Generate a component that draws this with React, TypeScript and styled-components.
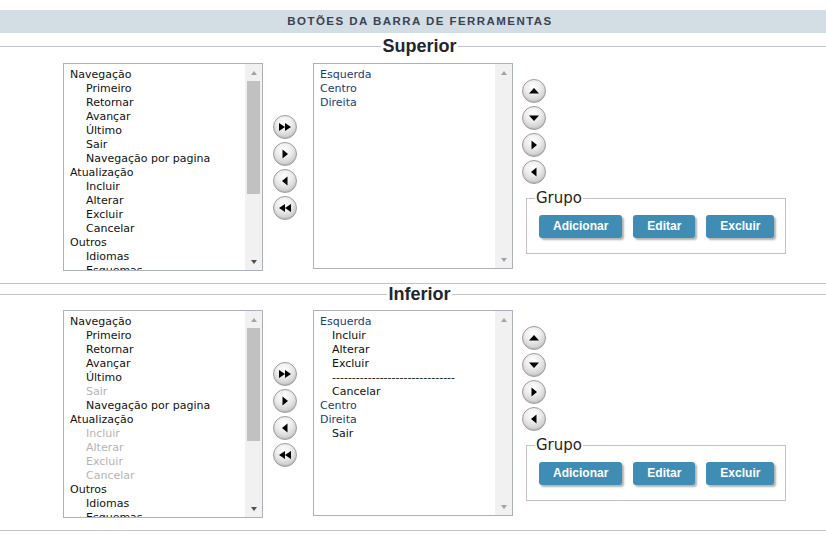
import React from "react";
import styled, { createGlobalStyle } from "styled-components";

const Global = createGlobalStyle`
  html, body { margin: 0; padding: 0; background: #fff; }
  body { font-family: "DejaVu Sans", Verdana, sans-serif; }
`;

const Page = styled.div`
  width: 826px;
  padding-top: 10px;
`;

const HeaderBar = styled.div`
  height: 23px;
  box-sizing: border-box;
  padding-left: 14px;
  background: #d3dde4;
  color: #3b4252;
  font: bold 11.5px/23px "Liberation Sans", Arial, sans-serif;
  letter-spacing: 1.45px;
  text-align: center;
  text-transform: uppercase;
`;

const Section = styled.fieldset<{ $mt: number; $pt: number }>`
  margin: ${(p) => p.$mt}px 0 0 0;
  padding: ${(p) => p.$pt}px 50px 12px 63px;
  border: none;
  border-top: 1px solid #c3c3c3;
  border-bottom: 1px solid #c3c3c3;
  min-width: 0;
`;

const SectionLegend = styled.legend`
  margin: 0 auto;
  padding: 0 1px;
  font: bold 18px/20px "Liberation Sans", Arial, sans-serif;
  color: #1f2531;
`;

const Row = styled.div`
  display: flex;
  align-items: flex-start;
`;

const ListBox = styled.div<{ $h: number }>`
  display: flex;
  width: 200px;
  height: ${(p) => p.$h}px;
  box-sizing: border-box;
  border: 1px solid #abb0b9;
  background: #fff;
  flex: none;
`;

const Items = styled.div`
  flex: 1;
  overflow: hidden;
  padding: 4px 0 0 6px;
`;

const Item = styled.div<{ $indent: number; $tone: "normal" | "group" | "disabled" }>`
  font: 11px/14px "DejaVu Sans", Verdana, sans-serif;
  white-space: nowrap;
  padding-left: ${(p) => p.$indent}px;
  color: ${(p) =>
    p.$tone === "group" ? "#203d78" : p.$tone === "disabled" ? "#b4b4b4" : "#111"};
`;

const Scrollbar = styled.div`
  width: 17px;
  background: #f1f1f1;
  display: flex;
  flex-direction: column;
  flex: none;
`;

const ScrollArrow = styled.div<{ $up: boolean; $active: boolean }>`
  height: 17px;
  display: flex;
  align-items: center;
  justify-content: center;
  flex: none;
  &::after {
    content: "";
    width: 0;
    height: 0;
    border-left: 3.5px solid transparent;
    border-right: 3.5px solid transparent;
    ${(p) =>
      p.$up
        ? `border-bottom: 4px solid ${p.$active ? "#505050" : "#a3a3a3"};`
        : `border-top: 4px solid ${p.$active ? "#505050" : "#a3a3a3"};`}
  }
`;

const Track = styled.div`
  flex: 1;
  padding: 0 2px;
`;

const Thumb = styled.div<{ $h: number }>`
  height: ${(p) => p.$h}px;
  background: #c1c1c1;
`;

const MoveColumn = styled.div`
  align-self: stretch;
  display: flex;
  flex-direction: column;
  justify-content: center;
  gap: 3px;
  margin: 0 16px 0 10px;
  padding-top: 1px;
`;

const SideColumn = styled.div`
  display: flex;
  flex-direction: column;
  align-items: flex-start;
  gap: 3px;
  padding-top: 16px;
  margin-left: 9px;
`;

const RoundButton = styled.button`
  width: 24px;
  height: 24px;
  border-radius: 50%;
  border: 1px solid #9c9c9c;
  padding: 0;
  display: flex;
  align-items: center;
  justify-content: center;
  background: radial-gradient(circle at 45% 30%, #ffffff 0%, #ececec 40%, #c4c4c4 85%, #b0b0b0 100%);
  box-shadow: inset 0 -1px 1px rgba(0, 0, 0, 0.1);
  cursor: pointer;
`;

const GroupBox = styled.fieldset`
  margin: 2px 0 0 4px;
  width: 260px;
  box-sizing: border-box;
  padding: 8px 10px 15px 8px;
  border: 1px solid #c2c2c2;
`;

const GroupLegend = styled.legend`
  padding: 0 1px;
  font: 15px/18px "DejaVu Sans", Verdana, sans-serif;
  color: #2a2016;
`;

const GroupButtons = styled.div`
  display: flex;
  gap: 11px;
  margin-left: 4px;
`;

const ActionButton = styled.button`
  height: 23px;
  padding: 0 14px;
  border: none;
  border-radius: 3px;
  background: #3f8db5;
  color: #fff;
  font: bold 12px/23px "Liberation Sans", Arial, sans-serif;
  box-shadow: 2px 2px 2px rgba(0, 0, 0, 0.3);
  cursor: pointer;
`;

type Icon = "rr" | "r" | "l" | "ll" | "up" | "down";

const Glyph = ({ kind }: { kind: Icon }) => {
  const paths: Record<Icon, string> = {
    rr: "M5 7 L11 11 L5 15 Z M11 7 L17 11 L11 15 Z",
    r: "M8.5 6.5 L14 11 L8.5 15.5 Z",
    l: "M13.5 6.5 L8 11 L13.5 15.5 Z",
    ll: "M11 7 L5 11 L11 15 Z M17 7 L11 11 L17 15 Z",
    up: "M6 13.5 L11 8 L16 13.5 Z",
    down: "M6 8.5 L11 14 L16 8.5 Z",
  };
  return (
    <svg width="22" height="22" viewBox="0 0 22 22">
      <path d={paths[kind]} fill="#000" />
    </svg>
  );
};

type Entry = { t: string; i: number; tone: "normal" | "group" | "disabled" };

const sourceEntries = (disabled: string[]): Entry[] => {
  const raw: [string, number][] = [
    ["Navegação", 0],
    ["Primeiro", 1],
    ["Retornar", 1],
    ["Avançar", 1],
    ["Último", 1],
    ["Sair", 1],
    ["Navegação por pagina", 1],
    ["Atualização", 0],
    ["Incluir", 1],
    ["Alterar", 1],
    ["Excluir", 1],
    ["Cancelar", 1],
    ["Outros", 0],
    ["Idiomas", 1],
    ["Esquemas", 1],
    ["Ajuda", 1],
    ["Exportar", 1],
    ["Imprimir", 1],
  ];
  return raw.map(([t, i]) => ({
    t,
    i: i * 16,
    tone: disabled.includes(t) ? "disabled" : "normal",
  }));
};

const dashes = "-".repeat(31);

const SourceList = ({ entries }: { entries: Entry[] }) => (
  <ListBox $h={208}>
    <Items>
      {entries.map((e, k) => (
        <Item key={k} $indent={e.i} $tone={e.tone}>
          {e.t}
        </Item>
      ))}
    </Items>
    <Scrollbar>
      <ScrollArrow $up $active={false} />
      <Track>
        <Thumb $h={113} />
      </Track>
      <ScrollArrow $up={false} $active />
    </Scrollbar>
  </ListBox>
);

const TargetList = ({ entries }: { entries: Entry[] }) => (
  <ListBox $h={206}>
    <Items>
      {entries.map((e, k) => (
        <Item key={k} $indent={e.i} $tone={e.tone}>
          {e.t}
        </Item>
      ))}
    </Items>
    <Scrollbar>
      <ScrollArrow $up $active={false} />
      <Track />
      <ScrollArrow $up={false} $active={false} />
    </Scrollbar>
  </ListBox>
);

const ToolbarSection = ({
  title,
  source,
  target,
  mt,
  pt,
}: {
  title: string;
  source: Entry[];
  target: Entry[];
  mt: number;
  pt: number;
}) => (
  <Section $mt={mt} $pt={pt}>
    <SectionLegend>{title}</SectionLegend>
    <Row>
      <SourceList entries={source} />
      <MoveColumn>
        <RoundButton aria-label="Mover todos"><Glyph kind="rr" /></RoundButton>
        <RoundButton aria-label="Mover"><Glyph kind="r" /></RoundButton>
        <RoundButton aria-label="Remover"><Glyph kind="l" /></RoundButton>
        <RoundButton aria-label="Remover todos"><Glyph kind="ll" /></RoundButton>
      </MoveColumn>
      <TargetList entries={target} />
      <SideColumn>
        <RoundButton aria-label="Subir"><Glyph kind="up" /></RoundButton>
        <RoundButton aria-label="Descer"><Glyph kind="down" /></RoundButton>
        <RoundButton aria-label="Indentar"><Glyph kind="r" /></RoundButton>
        <RoundButton aria-label="Desindentar"><Glyph kind="l" /></RoundButton>
        <GroupBox>
          <GroupLegend>Grupo</GroupLegend>
          <GroupButtons>
            <ActionButton>Adicionar</ActionButton>
            <ActionButton>Editar</ActionButton>
            <ActionButton>Excluir</ActionButton>
          </GroupButtons>
        </GroupBox>
      </SideColumn>
    </Row>
  </Section>
);

const g = (t: string): Entry => ({ t, i: 0, tone: "group" });
const c = (t: string): Entry => ({ t, i: 12, tone: "normal" });

export default function App() {
  return (
    <Page>
      <Global />
      <HeaderBar>Botões da barra de ferramentas</HeaderBar>
      <ToolbarSection
        title="Superior"
        mt={3}
        pt={7}
        source={sourceEntries([])}
        target={[g("Esquerda"), g("Centro"), g("Direita")]}
      />
      <ToolbarSection
        title="Inferior"
        mt={0}
        pt={6}
        source={sourceEntries(["Sair", "Incluir", "Alterar", "Excluir", "Cancelar"])}
        target={[
          g("Esquerda"),
          c("Incluir"),
          c("Alterar"),
          c("Excluir"),
          c(dashes),
          c("Cancelar"),
          g("Centro"),
          g("Direita"),
          c("Sair"),
        ]}
      />
    </Page>
  );
}
